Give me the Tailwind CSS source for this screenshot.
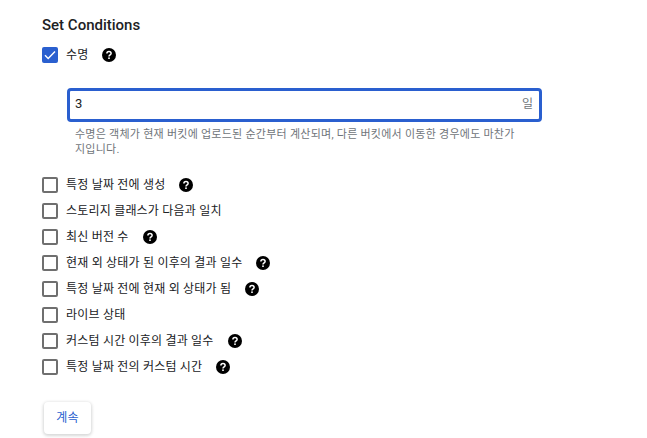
<!DOCTYPE html>
<html lang="ko">
<head>
<meta charset="utf-8">
<script src="https://cdn.jsdelivr.net/npm/@tailwindcss/browser@4"></script>
</head>
<body class="bg-white">
<div class="w-[647px] h-[438px] overflow-hidden pl-[42px] pt-[16px] text-[#202124] font-['Roboto','Noto_Sans_CJK_KR',sans-serif]">
  <h2 class="text-[15px] leading-[18px] font-medium">Set Conditions</h2>
  <div class="mt-[12px] flex items-center h-[18px]">
    <span class="w-[16px] h-[16px] rounded-[2px] bg-[#2a5fcf] flex items-center justify-center">
      <svg width="12" height="12" viewBox="0 0 12 12" fill="none" stroke="#fff" stroke-width="1.4"><path d="M1 6.2 4.2 9.6 11 2.4"/></svg>
    </span>
    <span class="ml-[8px] text-[12px] tracking-[0.2px] leading-[18px]">수명</span>
    <svg class="ml-[14px]" width="14" height="14" viewBox="0 0 14 14"><circle cx="7" cy="7" r="7" fill="#000"/><path d="M4.9 5.5C4.9 4.3 5.8 3.5 7 3.5 8.2 3.5 9.1 4.3 9.1 5.4 9.1 6.9 7 6.9 7 8.6" fill="none" stroke="#fff" stroke-width="1.5"/><rect x="6.2" y="9.4" width="1.6" height="1.6" fill="#fff"/></svg>
  </div>
  <div class="ml-[25px] mt-[24px] w-[475px] h-[34px] border-[3px] border-[#2a5fcf] rounded-[4px] flex items-center justify-between pl-[5px] pr-[6px] pb-[2px]">
    <span class="text-[13px] leading-[18px]">3</span>
    <span class="text-[12px] leading-[18px] text-[#70757a]">일</span>
  </div>
  <p class="ml-[33px] mt-[5px] w-[445px] text-[11px] tracking-[0.25px] leading-[15px] text-[#70757a]">수명은 객체가 현재 버킷에 업로드된 순간부터 계산되며, 다른 버킷에서 이동한 경우에도 마찬가<br>지입니다.</p>
  <ul class="mt-[15px] flex flex-col">
    <li class="h-[26px] flex items-center"><span class="w-[16px] h-[16px] rounded-[2px] border-2 border-[#6f6f6f]"></span><span class="ml-[8px] text-[12px] tracking-[0.2px]">특정 날짜 전에 생성</span><svg class="ml-[14px]" width="14" height="14" viewBox="0 0 14 14"><circle cx="7" cy="7" r="7" fill="#000"/><path d="M4.9 5.5C4.9 4.3 5.8 3.5 7 3.5 8.2 3.5 9.1 4.3 9.1 5.4 9.1 6.9 7 6.9 7 8.6" fill="none" stroke="#fff" stroke-width="1.5"/><rect x="6.2" y="9.4" width="1.6" height="1.6" fill="#fff"/></svg></li>
    <li class="h-[26px] flex items-center"><span class="w-[16px] h-[16px] rounded-[2px] border-2 border-[#6f6f6f]"></span><span class="ml-[8px] text-[12px] tracking-[0.2px]">스토리지 클래스가 다음과 일치</span></li>
    <li class="h-[26px] flex items-center"><span class="w-[16px] h-[16px] rounded-[2px] border-2 border-[#6f6f6f]"></span><span class="ml-[8px] text-[12px] tracking-[0.2px]">최신 버전 수</span><svg class="ml-[14px]" width="14" height="14" viewBox="0 0 14 14"><circle cx="7" cy="7" r="7" fill="#000"/><path d="M4.9 5.5C4.9 4.3 5.8 3.5 7 3.5 8.2 3.5 9.1 4.3 9.1 5.4 9.1 6.9 7 6.9 7 8.6" fill="none" stroke="#fff" stroke-width="1.5"/><rect x="6.2" y="9.4" width="1.6" height="1.6" fill="#fff"/></svg></li>
    <li class="h-[26px] flex items-center"><span class="w-[16px] h-[16px] rounded-[2px] border-2 border-[#6f6f6f]"></span><span class="ml-[8px] text-[12px] tracking-[0.2px]">현재 외 상태가 된 이후의 결과 일수</span><svg class="ml-[14px]" width="14" height="14" viewBox="0 0 14 14"><circle cx="7" cy="7" r="7" fill="#000"/><path d="M4.9 5.5C4.9 4.3 5.8 3.5 7 3.5 8.2 3.5 9.1 4.3 9.1 5.4 9.1 6.9 7 6.9 7 8.6" fill="none" stroke="#fff" stroke-width="1.5"/><rect x="6.2" y="9.4" width="1.6" height="1.6" fill="#fff"/></svg></li>
    <li class="h-[26px] flex items-center"><span class="w-[16px] h-[16px] rounded-[2px] border-2 border-[#6f6f6f]"></span><span class="ml-[8px] text-[12px] tracking-[0.2px]">특정 날짜 전에 현재 외 상태가 됨</span><svg class="ml-[14px]" width="14" height="14" viewBox="0 0 14 14"><circle cx="7" cy="7" r="7" fill="#000"/><path d="M4.9 5.5C4.9 4.3 5.8 3.5 7 3.5 8.2 3.5 9.1 4.3 9.1 5.4 9.1 6.9 7 6.9 7 8.6" fill="none" stroke="#fff" stroke-width="1.5"/><rect x="6.2" y="9.4" width="1.6" height="1.6" fill="#fff"/></svg></li>
    <li class="h-[26px] flex items-center"><span class="w-[16px] h-[16px] rounded-[2px] border-2 border-[#6f6f6f]"></span><span class="ml-[8px] text-[12px] tracking-[0.2px]">라이브 상태</span></li>
    <li class="h-[26px] flex items-center"><span class="w-[16px] h-[16px] rounded-[2px] border-2 border-[#6f6f6f]"></span><span class="ml-[8px] text-[12px] tracking-[0.2px]">커스텀 시간 이후의 결과 일수</span><svg class="ml-[14px]" width="14" height="14" viewBox="0 0 14 14"><circle cx="7" cy="7" r="7" fill="#000"/><path d="M4.9 5.5C4.9 4.3 5.8 3.5 7 3.5 8.2 3.5 9.1 4.3 9.1 5.4 9.1 6.9 7 6.9 7 8.6" fill="none" stroke="#fff" stroke-width="1.5"/><rect x="6.2" y="9.4" width="1.6" height="1.6" fill="#fff"/></svg></li>
    <li class="h-[26px] flex items-center"><span class="w-[16px] h-[16px] rounded-[2px] border-2 border-[#6f6f6f]"></span><span class="ml-[8px] text-[12px] tracking-[0.2px]">특정 날짜 전의 커스텀 시간</span><svg class="ml-[14px]" width="14" height="14" viewBox="0 0 14 14"><circle cx="7" cy="7" r="7" fill="#000"/><path d="M4.9 5.5C4.9 4.3 5.8 3.5 7 3.5 8.2 3.5 9.1 4.3 9.1 5.4 9.1 6.9 7 6.9 7 8.6" fill="none" stroke="#fff" stroke-width="1.5"/><rect x="6.2" y="9.4" width="1.6" height="1.6" fill="#fff"/></svg></li>
  </ul>
  <button class="ml-[2px] mt-[22px] w-[47px] h-[32px] rounded-[4px] bg-white text-[#2a5fcf] text-[12px] tracking-[0.2px] shadow-[0_1px_3px_1px_rgba(60,64,67,0.2)]">계속</button>
</div>
</body>
</html>
